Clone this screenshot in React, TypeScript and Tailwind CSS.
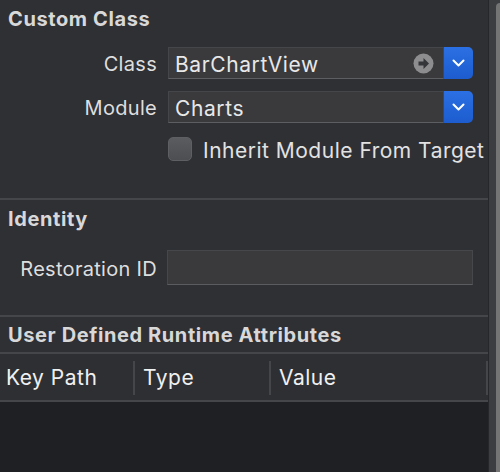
const font = { fontFamily: "Inter, 'Noto Sans', sans-serif" };

const SectionTitle = ({ children }: { children: string }) => (
  <h2 className="pl-2 text-[20px] font-bold leading-none tracking-[0.6px] text-[#d8d8d9]">{children}</h2>
);

const Divider = () => <div className="h-[2px] w-full bg-[#45464a]" />;

const ArrowCircle = () => (
  <svg width="21" height="21" viewBox="0 0 21 21">
    <circle cx="10.5" cy="10.5" r="10" fill="#8d8d8f" />
    <path d="M5.5 8.5h5V5l5.5 5.5-5.5 5.5v-3.5h-5z" fill="#35363a" />
  </svg>
);

const Chevron = () => (
  <svg width="13" height="8" viewBox="0 0 13 8">
    <path d="M1.5 1.5l5 5 5-5" fill="none" stroke="#fff" strokeWidth="2" strokeLinecap="round" strokeLinejoin="round" />
  </svg>
);

const Field = ({ value, arrow }: { value: string; arrow?: boolean }) => (
  <div className="flex h-[32px] w-[305px]">
    <div className="flex flex-1 items-center justify-between border border-[#45464a] border-b-[#5d5e61] bg-[#3a3a3d] pl-[6px] pr-[9px]">
      <span className="pt-[2px] text-[21px] leading-none tracking-[0.6px] text-[#e8e8e8]">{value}</span>
      {arrow && <ArrowCircle />}
    </div>
    <div className="flex w-[29px] items-center justify-center rounded-r-[5px] bg-gradient-to-b from-[#2b70e4] to-[#1c5ccf]">
      <Chevron />
    </div>
  </div>
);

const Label = ({ children }: { children: string }) => (
  <span className="w-[157px] pt-[2px] text-right text-[20px] tracking-[0.3px] text-[#dedede]">{children}</span>
);

const App = () => {
  return (
    <div className="flex h-[472px] w-[500px] bg-[#2f3034]" style={font}>
      <div className="flex flex-1 flex-col">
        <section className="flex h-[198px] flex-col pt-[9px]">
          <SectionTitle>Custom Class</SectionTitle>
          <div className="mt-[18px] flex items-center gap-[11px]">
            <Label>Class</Label>
            <Field value="BarChartView" arrow />
          </div>
          <div className="mt-[12px] flex items-center gap-[11px]">
            <Label>Module</Label>
            <Field value="Charts" />
          </div>
          <div className="mt-[14px] flex items-center gap-[11px] pl-[168px]">
            <div className="h-[24px] w-[24px] rounded-[5px] border border-[#5e5f62] bg-gradient-to-b from-[#5b5c60] to-[#4d4e52]" />
            <span className="pt-[2px] text-[21px] leading-none tracking-[0.5px] text-[#e2e2e2]">Inherit Module From Target</span>
          </div>
        </section>
        <Divider />
        <section className="flex h-[115px] flex-col pt-[9px]">
          <SectionTitle>Identity</SectionTitle>
          <div className="mt-[21px] flex items-center gap-[10px]">
            <Label>Restoration ID</Label>
            <div className="h-[35px] w-[306px] border border-[#46474b] border-b-[#5b5c5f] bg-[#3a3a3d]" />
          </div>
        </section>
        <Divider />
        <section className="flex h-[35px] flex-col pt-[8px]">
          <SectionTitle>User Defined Runtime Attributes</SectionTitle>
        </section>
        <Divider />
        <div className="flex h-[46px] items-center bg-[#2e2f33] pt-[2px] text-[21px] tracking-[0.5px] text-[#f0f0f0]">
          <div className="w-[133px] pl-[6px]">Key Path</div>
          <div className="h-[34px] w-[2px] bg-[#45464a]" />
          <div className="w-[134px] pl-[8px]">Type</div>
          <div className="h-[34px] w-[2px] bg-[#45464a]" />
          <div className="flex-1 pl-[8px]">Value</div>
          <div className="h-[34px] w-[2px] bg-[#45464a]" />
        </div>
        <Divider />
        <div className="flex-1 bg-[#1f2023]" />
      </div>
      <div className="w-[8px] border-l border-[#26272a] bg-[#3c3d41]" />
      <div className="flex w-[4px] flex-col bg-[#3c3d41] pt-[3px]">
        <div className="flex-1 rounded-tl-[4px] bg-[#747475]" />
      </div>
    </div>
  );
};

export default App;
